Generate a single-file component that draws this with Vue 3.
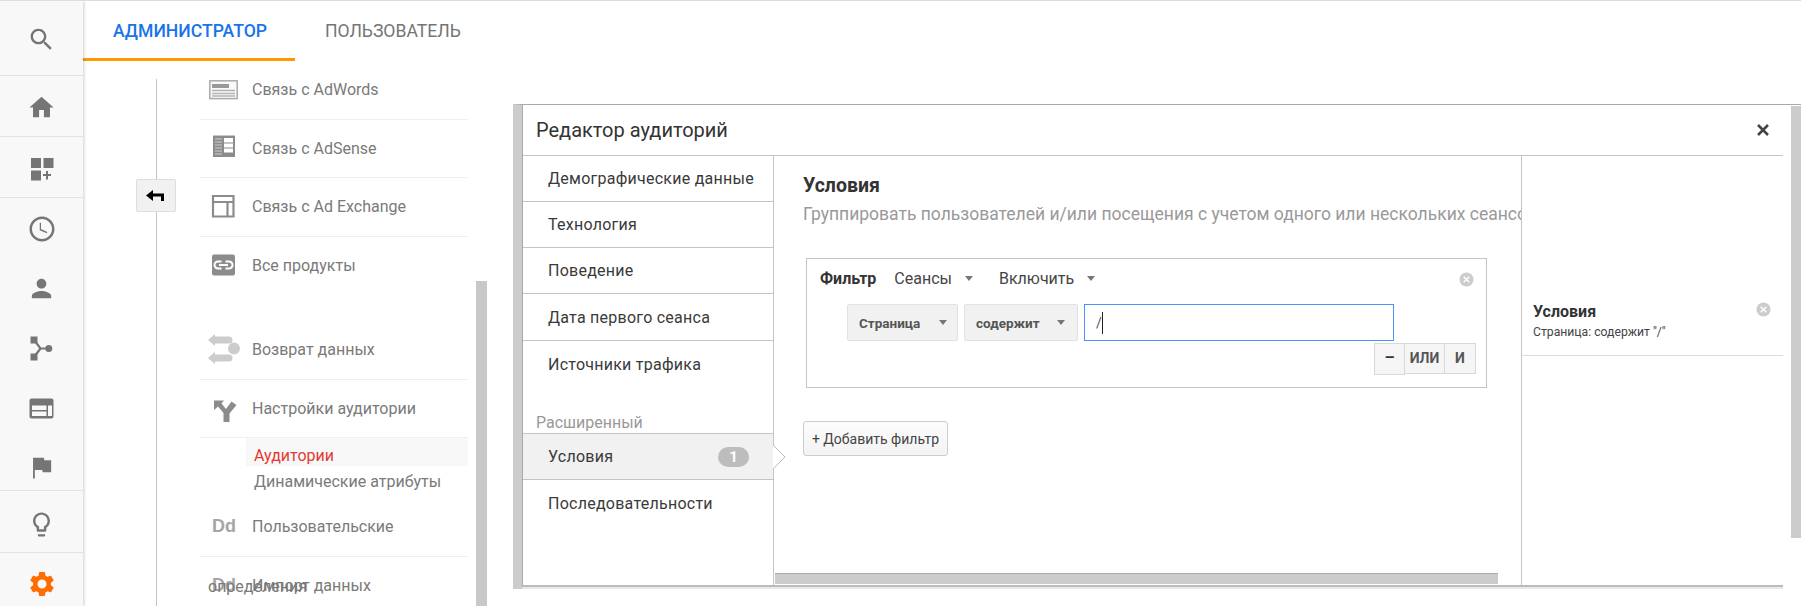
<script setup>
const menuMain = ['Демографические данные', 'Технология', 'Поведение', 'Дата первого сеанса', 'Источники трафика']
</script>

<template>
  <div class="page">
    <!-- left icon rail -->
    <aside class="sidebar">
      <div class="side-section first">
        <svg class="i29" viewBox="0 0 24 24"><path d="M15.5 14h-.79l-.28-.27C15.41 12.59 16 11.11 16 9.5 16 5.91 13.09 3 9.5 3S3 5.91 3 9.5 5.91 16 9.5 16c1.61 0 3.09-.59 4.23-1.57l.27.28v.79l5 4.99L20.49 19l-4.99-5zm-6 0C7.01 14 5 11.99 5 9.5S7.01 5 9.5 5 14 7.01 14 9.5 11.99 14 9.5 14z" /></svg>
      </div>
      <div class="side-section">
        <svg class="i29" viewBox="0 0 24 24"><path d="M10 20v-6h4v6h5v-8h3L12 3 2 12h3v8z" /></svg>
      </div>
      <div class="side-section">
        <svg class="i29" viewBox="0 0 29 29"><path d="M4 4h10v10H4zM16.500 4h10v10h-10zM4 16.500h10v10H4zM19 17h2v3h3v2h-3v3.500h-2V22h-3v-2h3z" /></svg>
      </div>
      <div class="side-group">
        <div class="side-row"><svg class="i30" viewBox="0 0 24 24"><path d="M11.990 2C6.470 2 2 6.480 2 12s4.470 10 9.990 10C17.520 22 22 17.520 22 12S17.520 2 11.990 2zM12 20c-4.420 0-8-3.580-8-8s3.580-8 8-8 8 3.580 8 8-3.580 8-8 8zm-.8-13h-1v6l5.600 2.400.4-1-5-2.400z" /></svg></div>
        <div class="side-row"><svg class="i29" viewBox="0 0 24 24"><path d="M12 12c2.210 0 4-1.790 4-4s-1.790-4-4-4-4 1.790-4 4 1.790 4 4 4zm0 2c-2.670 0-8 1.340-8 4v2h16v-2c0-2.660-5.330-4-8-4z" /></svg></div>
        <div class="side-row"><svg class="i29" viewBox="0 0 29 29"><path d="M3.500 2.500h7v7h-7zM3.500 19.500h7v7h-7zM18.300 14.500a3.500 3.500 0 1 1 7 0 3.500 3.500 0 0 1-7 0z" /><path d="M7 6l6.500 8.500H21M13.500 14.500L7 23" fill="none" stroke="#757575" stroke-width="2.200" /></svg></div>
        <div class="side-row"><svg class="i29" viewBox="0 0 29 29"><path fill-rule="evenodd" d="M4.500 4.500h20a2 2 0 0 1 2 2v16a2 2 0 0 1-2 2h-20a2 2 0 0 1-2-2v-16a2 2 0 0 1 2-2zM5 11.500V16h14.500v-4.500zM5 17.500V22h14.500v-4.500zM21 11.500V22h4v-10.500z" /></svg></div>
        <div class="side-row last"><svg class="i29" viewBox="0 0 24 24"><path d="M14.400 6L14 4H5v17h1.500v-7h6.100l.4 2h7V6z" /></svg></div>
      </div>
      <div class="side-section bulb">
        <svg class="i29" viewBox="0 0 24 24"><path d="M9 21c0 .55.45 1 1 1h4c.55 0 1-.45 1-1v-1H9v1zm3-19C8.140 2 5 5.140 5 9c0 2.380 1.190 4.470 3 5.740V17c0 .55.45 1 1 1h6c.55 0 1-.45 1-1v-2.260c1.810-1.270 3-3.360 3-5.740 0-3.860-3.140-7-7-7zm2.850 11.100l-.85.6V16h-4v-2.300l-.85-.6C7.800 12.160 7 10.630 7 9c0-2.760 2.240-5 5-5s5 2.240 5 5c0 1.630-.8 3.160-2.150 4.100z" /></svg>
      </div>
      <div class="side-section gear">
        <svg class="i30" viewBox="0 0 24 24"><path d="M19.140 12.940c.04-.3.06-.61.06-.94 0-.32-.02-.64-.07-.94l2.030-1.580c.18-.14.23-.41.12-.61l-1.920-3.320c-.12-.22-.37-.29-.59-.22l-2.390.96c-.5-.38-1.030-.7-1.620-.94l-.36-2.540c-.04-.24-.24-.41-.48-.41h-3.840c-.24 0-.43.17-.47.41l-.36 2.540c-.59.24-1.130.57-1.620.94l-2.390-.96c-.22-.08-.47 0-.59.22L2.740 8.870c-.12.21-.08.47.12.61l2.030 1.580c-.05.3-.09.63-.09.94s.02.64.07.94l-2.030 1.580c-.18.14-.23.41-.12.61l1.920 3.320c.12.22.37.29.59.22l2.390-.96c.5.38 1.030.7 1.620.94l.36 2.540c.05.24.24.41.48.41h3.840c.24 0 .44-.17.47-.41l.36-2.540c.59-.24 1.130-.56 1.620-.94l2.390.96c.22.08.47 0 .59-.22l1.920-3.320c.12-.22.07-.47-.12-.61l-2.010-1.580zM12 15.600c-1.980 0-3.600-1.620-3.600-3.600s1.620-3.600 3.600-3.600 3.600 1.620 3.600 3.600-1.620 3.600-3.600 3.600z" /></svg>
      </div>
    </aside>

    <main class="main">
      <nav class="tabs">
        <div class="tab active">АДМИНИСТРАТОР</div>
        <div class="tab">ПОЛЬЗОВАТЕЛЬ</div>
      </nav>

      <div class="admin">
        <div class="rail">
          <div class="rail-line top"></div>
          <button class="back">
            <svg class="back-arrow" width="18" height="12" viewBox="0 0 18 12"><path d="M0 5.500L7 0v3.500h11V11h-3V6.500H7V11z" /></svg>
          </button>
          <div class="rail-line"></div>
        </div>

        <div class="prop-list">
          <div class="prop">
            <svg class="prop-icon" viewBox="0 0 32 32"><rect x="1.800" y="6.800" width="27.400" height="17.800" fill="#f9f9f9" stroke="#aaa" stroke-width="1.500" /><path d="M4 10h17v4H4z" fill="#999" /><path d="M4 16.500h23M4 19.500h23M4 22h23" stroke="#b4b4b4" stroke-width="1.400" /></svg>
            Связь с AdWords
          </div>
          <div class="prop">
            <svg class="prop-icon" viewBox="0 0 32 32"><path d="M5 3.500h22v21.500H5z" fill="#8c8c8c" /><path d="M16 6h9v4.500h-9zM16 11.500h9v4h-9zM16 16.500h9v4h-9z" fill="#fff" /><path d="M7 7h7M7 10h7M7 13h7M7 16h7M7 19h7M7 22h7" stroke="#b8b8b8" stroke-width="1.300" /></svg>
            Связь с AdSense
          </div>
          <div class="prop">
            <svg class="prop-icon" viewBox="0 0 32 32"><path d="M5 5h20.500v20.500H5zM5 11h20.500M19.500 11v14.500" fill="none" stroke="#8c8c8c" stroke-width="2.200" /></svg>
            Связь с Ad Exchange
          </div>
          <div class="prop no-border">
            <svg class="prop-icon" viewBox="0 0 32 32"><rect x="4" y="4.500" width="23" height="21" rx="2" fill="#8c8c8c" /><path d="M13.500 11.500H10a3.500 3.500 0 0 0 0 7h3.500M17.500 11.500H21a3.500 3.500 0 0 1 0 7h-3.500M11 15h9" fill="none" stroke="#fff" stroke-width="2" /></svg>
            Все продукты
          </div>

          <div class="prop section-start">
            <svg class="prop-icon" viewBox="0 0 32 32" fill="#ccc"><path d="M0 6l7-6v2.500h14a3.500 3.500 0 0 1 0 7H7V12zM32 14.500a6 6 0 1 0-12 0 6 6 0 0 0 12 0zM0 24l7-6v2.500h14a3.500 3.500 0 0 1 0 7H7V30z" /></svg>
            Возврат данных
          </div>
          <div class="prop">
            <svg class="prop-icon" viewBox="0 0 32 32" fill="#8c8c8c"><path d="M6 8.500h10l-2.500 3 4.500 5.500 5.500-7.500 5 3.500-7 8.500V30h-6v-9l-5.500-6.500L6 18z" /></svg>
            Настройки аудитории
          </div>
          <div class="sub selected">Аудитории</div>
          <div class="sub dyn">Динамические атрибуты</div>
          <div class="prop">
            <span class="dd">Dd</span>
            Пользовательские
          </div>
          <div class="prop no-border">
            <span class="dd">Dd</span>
            Импорт данных
            <span class="overlap">определения</span>
          </div>
        </div>

        <div class="page-scroll"></div>
      </div>
    </main>

    <!-- Audience editor, floating over the admin page -->
    <section class="dialog">
      <div class="panel">
        <header class="panel-head">
          <span>Редактор аудиторий</span>
          <svg class="close" width="12" height="12" viewBox="0 0 12 12"><path d="M1 1l10 10M11 1L1 11" stroke="#444" stroke-width="2.600" /></svg>
        </header>

        <div class="panel-body">
          <div class="menu">
            <div v-for="item in menuMain" :key="item" class="menu-item">{{ item }}</div>
            <div class="menu-label">Расширенный</div>
            <div class="menu-item active">
              Условия
              <span class="badge">1</span>
              <svg class="pointer" width="13" height="26" viewBox="0 0 13 26"><path d="M0 1l12 12L0 25" fill="#fff" stroke="#bbb" /></svg>
            </div>
            <div class="menu-item plain">Последовательности</div>
          </div>

          <div class="content">
            <div class="content-inner">
              <h2>Условия</h2>
              <p class="subtitle">Группировать пользователей и/или посещения с учетом одного или нескольких сеансов.</p>

              <div class="filter">
                <div class="filter-head">
                  <b>Фильтр</b>
                  <span class="drop">Сеансы<i class="tri"></i></span>
                  <span class="drop">Включить<i class="tri"></i></span>
                  <svg class="remove filter-remove" viewBox="0 0 16 16"><circle cx="8" cy="8" r="7.500" fill="#ccc" /><path d="M5 5l6 6M11 5l-6 6" stroke="#fff" stroke-width="1.500" /></svg>
                </div>
                <div class="filter-row">
                  <div class="select wide">Страница<i class="tri"></i></div>
                  <div class="select">содержит<i class="tri"></i></div>
                  <div class="value">/<span class="caret"></span></div>
                </div>
                <div class="filter-ops">
                  <div class="op minus">–</div>
                  <div class="op or">ИЛИ</div>
                  <div class="op and">И</div>
                </div>
              </div>

              <button class="add">+ Добавить фильтр</button>
            </div>
            <div class="h-scroll"></div>
          </div>

          <div class="summary">
            <div class="summary-card">
              <div class="summary-title">Условия</div>
              <div class="summary-text">Страница: содержит "/"</div>
              <svg class="remove summary-remove" viewBox="0 0 16 16"><circle cx="8" cy="8" r="7.500" fill="#ccc" /><path d="M5 5l6 6M11 5l-6 6" stroke="#fff" stroke-width="1.500" /></svg>
            </div>
          </div>
        </div>
      </div>
      <div class="dialog-scroll"></div>
    </section>
  </div>
</template>

<style scoped>
.page {
  position: relative;
  display: flex;
  width: 1801px;
  height: 606px;
  overflow: hidden;
  background: #fff;
  border-top: 1px solid #ddd;
  box-sizing: border-box;
  font-family: Roboto, "Liberation Sans", sans-serif;
}

svg {
  display: block;
}

/* sidebar */
.sidebar {
  flex: none;
  width: 83px;
  height: 605px;
  background: #f8f8f8;
  box-shadow: 1px 0 3px rgba(0, 0, 0, 0.2);
  z-index: 1;
  fill: #757575;
}
.side-section {
  height: 61px;
  padding-top: 2px;
  display: flex;
  align-items: center;
  justify-content: center;
  border-bottom: 1px solid #e2e2e2;
  box-sizing: border-box;
}
.side-section.first {
  height: 75px;
}
.side-section.bulb {
  height: 62px;
  padding-top: 5px;
}
.side-section.gear {
  height: 53px;
  border-bottom: 0;
  padding-top: 8px;
  fill: #ff6d00;
}
.side-group {
  height: 293px;
  box-sizing: border-box;
  border-bottom: 1px solid #e2e2e2;
}
.side-row {
  height: 60px;
  padding-top: 1px;
  box-sizing: border-box;
  display: flex;
  align-items: center;
  justify-content: center;
}
.side-row.last {
  height: 52px;
  padding-top: 7px;
}
.i29 {
  width: 29px;
  height: 29px;
}
.i30 {
  width: 30px;
  height: 30px;
}

/* page */
.main {
  flex: 1;
  min-width: 0;
}
.tabs {
  display: flex;
  height: 60px;
}
.tab {
  padding: 0 30px;
  font-size: 17.600px;
  line-height: 60px;
  color: #757575;
  box-sizing: border-box;
}
.tab.active {
  width: 212px;
  color: #1a73e8;
  font-weight: 500;
  border-bottom: 3px solid #ff9800;
  white-space: nowrap;
}

.admin {
  display: flex;
  height: 545px;
}
.rail {
  flex: none;
  display: flex;
  flex-direction: column;
  align-items: center;
  width: 40px;
  margin-left: 53px;
  padding-top: 18px;
  box-sizing: border-box;
}
.rail-line {
  flex: 1;
  width: 1px;
  background: #c4c4c4;
}
.rail-line.top {
  flex: none;
  height: 100px;
}
.back {
  flex: none;
  width: 40px;
  height: 33px;
  padding: 0;
  display: flex;
  align-items: center;
  justify-content: center;
  background: #f1f1f1;
  border: 1px solid #ddd;
  border-radius: 2px;
}
.back-arrow {
  margin-right: 3px;
}
.prop-list {
  flex: none;
  width: 268px;
  margin-left: 24px;
  font-size: 16px;
  color: #7a7a7a;
}
.prop {
  position: relative;
  display: flex;
  align-items: center;
  height: 58.5px;
  border-bottom: 1px solid #efefef;
  box-sizing: border-box;
}
.prop.no-border {
  border-bottom: 0;
}
.prop.section-start {
  margin-top: 26px;
}
.prop-icon {
  flex: none;
  width: 32px;
  height: 32px;
  margin: 0 12px 0 8px;
}
.dd {
  flex: none;
  width: 32px;
  margin: 0 12px 0 8px;
  text-align: center;
  font-family: "Liberation Sans", sans-serif;
  font-weight: 700;
  font-size: 18px;
  color: #a5a5a5;
}
.overlap {
  position: absolute;
  left: 8px;
  top: 20px;
}
.sub {
  height: 28px;
  margin-left: 46px;
  padding-left: 8px;
  line-height: 36px;
  box-sizing: border-box;
}
.sub.selected {
  background: #f8f8f8;
  color: #e53935;
}
.sub.dyn {
  height: 32px;
  line-height: 32px;
}
.page-scroll {
  flex: none;
  width: 11px;
  margin: 220px 0 0 8px;
  background: #c8c8c8;
}

/* dialog */
.dialog {
  position: absolute;
  left: 513px;
  top: 103px;
  z-index: 2;
  display: flex;
  align-items: flex-start;
  gap: 8px;
  width: 1288px;
  height: 485px;
  box-sizing: border-box;
  background: #fff;
  border-top: 1px solid #aaa;
  border-left: 9px solid #ccc;
}
.panel {
  flex: none;
  width: 1261px;
  height: 484px;
  box-sizing: border-box;
  border-left: 1px solid #aaa;
  border-bottom: 4px solid #e9e9e9;
  display: flex;
  flex-direction: column;
}
.dialog-scroll {
  flex: none;
  width: 10px;
  height: 432px;
  margin-top: 1px;
  background: #ccc;
}
.panel-head {
  flex: none;
  display: flex;
  align-items: center;
  justify-content: space-between;
  height: 51px;
  padding: 0 14px 0 13px;
  box-sizing: border-box;
  border-bottom: 1px solid #c4c4c4;
  font-size: 20px;
  color: #333;
}
.panel-body {
  flex: 1;
  min-height: 0;
  display: flex;
  border-bottom: 2px solid #bbb;
  margin-bottom: -2px;
}
.menu {
  flex: none;
  width: 251px;
  box-sizing: border-box;
  border-right: 1px solid #c4c4c4;
}
.menu-item {
  position: relative;
  display: flex;
  align-items: center;
  height: 46px;
  padding-left: 25px;
  box-sizing: border-box;
  border-bottom: 1px solid #c4c4c4;
  font-size: 16px;
  letter-spacing: 0.25px;
  color: #3a3a3a;
}
.menu-item:nth-child(4) {
  height: 47px;
}
.menu-item:nth-child(5) {
  border-bottom: 0;
}
.menu-item.active {
  background: #f1f1f1;
  border-top: 1px solid #c4c4c4;
  height: 47px;
}
.menu-item.plain {
  border-bottom: 0;
}
.menu-label {
  height: 46px;
  padding: 27px 0 0 13px;
  box-sizing: border-box;
  font-size: 16px;
  line-height: 18px;
  color: #999;
}
.badge {
  position: absolute;
  right: 24px;
  top: 13px;
  width: 31px;
  height: 20px;
  border-radius: 10px;
  background: #bdbdbd;
  color: #fff;
  font-size: 15px;
  font-weight: 700;
  line-height: 20px;
  text-align: center;
  letter-spacing: 0;
}
.pointer {
  position: absolute;
  right: -13px;
  top: 10px;
}
.content {
  flex: none;
  width: 748px;
  display: flex;
  flex-direction: column;
  overflow: hidden;
  box-sizing: border-box;
  border-right: 1px solid #c4c4c4;
}
.content-inner {
  flex: 1;
  min-height: 0;
  padding: 19px 0 0 29px;
}
h2 {
  margin: 0;
  font-size: 19.500px;
  line-height: 22px;
  font-weight: 700;
  color: #333;
}
.subtitle {
  margin: 6px 0 0;
  font-size: 17.500px;
  line-height: 22px;
  color: #999;
  white-space: nowrap;
}
.filter {
  width: 681px;
  height: 130px;
  margin: 33px 0 0 3px;
  box-sizing: border-box;
  border: 1px solid #c4c4c4;
  position: relative;
}
.filter-head {
  display: flex;
  align-items: center;
  height: 38px;
  padding-left: 13px;
  font-size: 16px;
  color: #444;
}
.filter-head b {
  color: #333;
  margin-right: 18px;
}
.drop {
  display: flex;
  align-items: center;
  margin-right: 26px;
}
.tri {
  display: inline-block;
  margin-left: 13px;
  border: 4.500px solid transparent;
  border-top: 5px solid #777;
  border-bottom: 0;
}
.remove {
  width: 15px;
  height: 15px;
}
.filter-remove {
  position: absolute;
  right: 12px;
  top: 13px;
}
.filter-row {
  display: flex;
  gap: 6px;
  margin: 7px 0 0 40px;
}
.select {
  display: flex;
  align-items: center;
  justify-content: space-between;
  width: 114px;
  height: 37px;
  padding: 0 12px 0 11px;
  box-sizing: border-box;
  background: #f1f1f1;
  border: 1px solid #e2e2e2;
  border-radius: 2px;
  font-size: 13.500px;
  font-weight: 700;
  color: #555;
}
.select .tri {
  margin-left: 0;
}
.select.wide {
  width: 111px;
  padding-right: 10px;
}
.value {
  display: flex;
  align-items: center;
  width: 310px;
  height: 37px;
  padding-left: 11px;
  box-sizing: border-box;
  border: 1px solid #4d90fe;
  font-size: 14px;
  color: #555;
}
.caret {
  width: 1px;
  height: 22px;
  background: #222;
}
.filter-ops {
  display: flex;
  justify-content: flex-end;
  margin: 2px 10px 0 0;
}
.op {
  height: 31px;
  width: 40px;
  box-sizing: border-box;
  border: 1px solid #d8d8d8;
  border-left: 0;
  background: #f5f5f5;
  font-size: 14px;
  font-weight: 700;
  line-height: 28px;
  text-align: center;
  color: #555;
}
.op.minus {
  width: 31px;
  height: 32px;
  border-left: 1px solid #d8d8d8;
  font-size: 16px;
  color: #333;
}
.op.and {
  width: 31px;
}
.add {
  display: block;
  width: 145px;
  height: 35px;
  margin-top: 33px;
  padding: 0;
  box-sizing: border-box;
  background: linear-gradient(#fcfcfc, #f3f3f3);
  border: 1px solid #ccc;
  border-radius: 3px;
  font-family: inherit;
  font-size: 14px;
  color: #444;
}
.h-scroll {
  flex: none;
  width: 723px;
  height: 11px;
  margin: 0 0 1px 1px;
  background: #ccc;
  border-top: 1px solid #aaa;
  box-sizing: border-box;
}
.summary {
  flex: 1;
  min-width: 0;
}
.summary-card {
  position: relative;
  height: 200px;
  padding: 146px 0 0 11px;
  box-sizing: border-box;
  border-bottom: 1px solid #ddd;
}
.summary-title {
  font-size: 16px;
  font-weight: 700;
  line-height: 20px;
  color: #333;
}
.summary-text {
  font-size: 12.200px;
  line-height: 20px;
  color: #444;
}
.summary-remove {
  position: absolute;
  right: 12px;
  top: 146px;
}
</style>

<style>
html, body {
  margin: 0;
  overflow: hidden;
}
</style>
